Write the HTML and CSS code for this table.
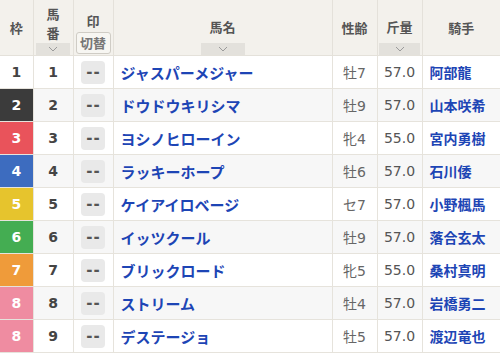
FILE: index.html
```html
<!DOCTYPE html>
<html lang="ja">
<head>
<meta charset="utf-8">
<link rel="stylesheet" href="styles.css">
</head>
<body>
<table class="race">
  <colgroup>
    <col class="c-waku"><col class="c-ban"><col class="c-mark"><col class="c-name"><col class="c-sex"><col class="c-kin"><col class="c-jockey">
  </colgroup>
  <thead>
    <tr>
      <th><div class="hcell"><span class="ht">枠</span></div></th>
      <th><div class="hcell stack"><span class="ht v">馬<br>番</span><span class="sort"><svg width="10" height="6" viewBox="0 0 10 6"><polyline points="1,1 5,5 9,1" fill="none" stroke="#9a9a9a" stroke-width="1"/></svg></span></div></th>
      <th><div class="hcell stack"><span class="ht m">印</span><span class="swap">切替</span></div></th>
      <th><div class="hcell stack"><span class="ht">馬名</span><span class="sort wide"><svg width="10" height="6" viewBox="0 0 10 6"><polyline points="1,1 5,5 9,1" fill="none" stroke="#9a9a9a" stroke-width="1"/></svg></span></div></th>
      <th><div class="hcell"><span class="ht">性齢</span></div></th>
      <th><div class="hcell stack"><span class="ht">斤量</span><span class="sort kin"><svg width="10" height="6" viewBox="0 0 10 6"><polyline points="1,1 5,5 9,1" fill="none" stroke="#9a9a9a" stroke-width="1"/></svg></span></div></th>
      <th><div class="hcell"><span class="ht">騎手</span></div></th>
    </tr>
  </thead>
  <tbody>
    <tr><td class="waku w1">1</td><td class="ban">1</td><td class="mark"><span class="mk">--</span></td><td class="name">ジャスパーメジャー</td><td class="sex">牡7</td><td class="kin">57.0</td><td class="jockey">阿部龍</td></tr>
    <tr><td class="waku w2">2</td><td class="ban">2</td><td class="mark"><span class="mk">--</span></td><td class="name">ドウドウキリシマ</td><td class="sex">牡9</td><td class="kin">57.0</td><td class="jockey">山本咲希</td></tr>
    <tr><td class="waku w3">3</td><td class="ban">3</td><td class="mark"><span class="mk">--</span></td><td class="name">ヨシノヒローイン</td><td class="sex">牝4</td><td class="kin">55.0</td><td class="jockey">宮内勇樹</td></tr>
    <tr><td class="waku w4">4</td><td class="ban">4</td><td class="mark"><span class="mk">--</span></td><td class="name">ラッキーホープ</td><td class="sex">牡6</td><td class="kin">57.0</td><td class="jockey">石川倭</td></tr>
    <tr><td class="waku w5">5</td><td class="ban">5</td><td class="mark"><span class="mk">--</span></td><td class="name">ケイアイロベージ</td><td class="sex">セ7</td><td class="kin">57.0</td><td class="jockey">小野楓馬</td></tr>
    <tr><td class="waku w6">6</td><td class="ban">6</td><td class="mark"><span class="mk">--</span></td><td class="name">イッツクール</td><td class="sex">牡9</td><td class="kin">57.0</td><td class="jockey">落合玄太</td></tr>
    <tr><td class="waku w7">7</td><td class="ban">7</td><td class="mark"><span class="mk">--</span></td><td class="name">ブリックロード</td><td class="sex">牝5</td><td class="kin">55.0</td><td class="jockey">桑村真明</td></tr>
    <tr><td class="waku w8">8</td><td class="ban">8</td><td class="mark"><span class="mk">--</span></td><td class="name">ストリーム</td><td class="sex">牡4</td><td class="kin">57.0</td><td class="jockey">岩橋勇二</td></tr>
    <tr><td class="waku w8">8</td><td class="ban">9</td><td class="mark"><span class="mk">--</span></td><td class="name">デステージョ</td><td class="sex">牡5</td><td class="kin">57.0</td><td class="jockey">渡辺竜也</td></tr>
  </tbody>
</table>
</body>
</html>
```

FILE: styles.css
```css
html, body {
  margin: 0;
  padding: 0;
  background: #ffffff;
}
body {
  font-family: "DejaVu Sans", "Noto Sans CJK JP", sans-serif;
  color: #444;
}
.race {
  border-collapse: collapse;
  table-layout: fixed;
  width: 500px;
}
.c-waku { width: 33px; }
.c-ban { width: 40px; }
.c-mark { width: 40px; }
.c-name { width: 219px; }
.c-sex { width: 45px; }
.c-kin { width: 45px; }
.c-jockey { width: 78px; }

.race th {
  background: #f3f1ec;
  border: 1px solid #e4e1da;
  border-top: none;
  height: 55px;
  padding: 0;
  vertical-align: top;
}
.race th:first-child { border-left: none; }
.race th:last-child { border-right: none; }
.hcell {
  height: 55px;
  display: flex;
  flex-direction: column;
  align-items: center;
  justify-content: center;
}
.hcell.stack {
  justify-content: flex-end;
  padding-bottom: 0;
  box-sizing: border-box;
}
.ht {
  font-family: "Noto Sans CJK JP", sans-serif;
  font-weight: bold;
  font-size: 13px;
  color: #555;
  line-height: 17px;
}
.hcell.stack .ht { margin-bottom: 8px; }
.hcell.stack .ht.v {
  line-height: 19px;
  margin-bottom: 1px;
}
.hcell.stack .ht.m { margin-bottom: 3px; }
.sort {
  display: flex;
  align-items: center;
  justify-content: center;
  width: 34px;
  height: 12px;
  background: #e3e1dc;
}
.sort.wide { width: 44px; }
.sort.kin { width: 41px; }
.swap {
  font-family: "Noto Sans CJK JP", sans-serif;
  font-size: 13px;
  color: #777;
  border: 1px solid #cfccc5;
  border-radius: 3px;
  background: #f7f6f2;
  width: 33px;
  height: 20px;
  line-height: 19px;
  text-align: center;
  margin-bottom: 1px;
}

.race td {
  height: 32px;
  padding: 0;
  border: 1px solid #e6e3dc;
  text-align: center;
  vertical-align: middle;
}
.race td:first-child { border-left: none; }
.race td:last-child { border-right: none; }
.race tbody tr:nth-child(even) td { background: #f7f7f7; }
.race tbody tr:nth-child(odd) td { background: #ffffff; }

.race tbody td.waku {
  font-weight: bold;
  font-size: 14px;
  color: #fff;
}
.race tbody tr td.w1 { background: #ffffff; color: #444; }
.race tbody tr td.w2 { background: #3b3b3b; }
.race tbody tr td.w3 { background: #e9535b; }
.race tbody tr td.w4 { background: #3d6cbf; }
.race tbody tr td.w5 { background: #e6c42d; }
.race tbody tr td.w6 { background: #44ad52; }
.race tbody tr td.w7 { background: #ef9b3a; }
.race tbody tr td.w8 { background: #ef8ca1; }

.race td.ban {
  font-weight: bold;
  font-size: 14px;
  color: #444;
}
.mk {
  display: inline-flex;
  align-items: center;
  justify-content: center;
  width: 24px;
  height: 23px;
  border-radius: 4px;
  background: #e9e9e9;
  font-weight: bold;
  font-size: 15px;
  color: #555;
  letter-spacing: 1px;
  text-indent: 1px;
  vertical-align: middle;
}
.race td.name {
  text-align: left;
  padding-left: 7px;
  font-family: "Noto Sans CJK JP", sans-serif;
  font-weight: bold;
  font-size: 15px;
  color: #1d45b5;
  white-space: nowrap;
  overflow: hidden;
}
.race td.sex {
  font-size: 14px;
  color: #666;
  font-family: "DejaVu Sans", "Noto Sans CJK JP", sans-serif;
}
.race td.kin {
  font-size: 14px;
  color: #555;
}
.race td.jockey {
  text-align: left;
  padding-left: 7px;
  font-family: "Noto Sans CJK JP", sans-serif;
  font-weight: bold;
  font-size: 14px;
  color: #1d45b5;
}
```
